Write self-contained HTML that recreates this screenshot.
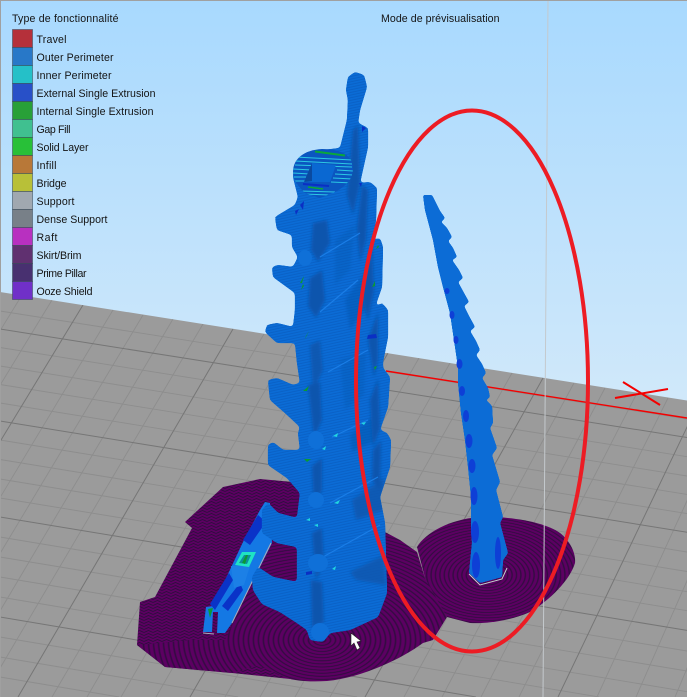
<!DOCTYPE html>
<html><head><meta charset="utf-8"><style>
html,body{margin:0;padding:0;width:687px;height:697px;overflow:hidden;background:#a9d9fe}
svg{display:block}
text{font-family:"Liberation Sans",sans-serif;font-size:10.6px;fill:#141414}
</style></head><body>
<svg width="687" height="697" viewBox="0 0 687 697" xmlns="http://www.w3.org/2000/svg">
<defs>
<linearGradient id="bg" x1="0" y1="0" x2="0" y2="1"><stop offset="0" stop-color="#a8d9fe"/><stop offset=".6" stop-color="#d2e9fa"/><stop offset="1" stop-color="#d6ebfa"/></linearGradient>
<clipPath id="floor"><path d="M0 292L687 400.5V697H0Z"/></clipPath>
<radialGradient id="ringL" gradientUnits="userSpaceOnUse" cx="0" cy="0" r="5" spreadMethod="repeat" gradientTransform="translate(322 640) scale(1 .62)"><stop offset="0" stop-color="#5c0062"/><stop offset=".45" stop-color="#5c0062"/><stop offset=".7" stop-color="#2c0e3c"/><stop offset="1" stop-color="#5c0062"/></radialGradient>
<radialGradient id="ringR" gradientUnits="userSpaceOnUse" cx="0" cy="0" r="4.4" spreadMethod="repeat" gradientTransform="translate(487 575) scale(1 .62)"><stop offset="0" stop-color="#5c0062"/><stop offset=".45" stop-color="#5c0062"/><stop offset=".7" stop-color="#2c0e3c"/><stop offset="1" stop-color="#5c0062"/></radialGradient>
<pattern id="chev" width="9" height="3" patternUnits="userSpaceOnUse"><rect width="9" height="3" fill="#5c0062"/><path d="M0 2.500L4.500 .5L9 2.500" fill="none" stroke="#2c0e3c" stroke-width=".9"/></pattern>
<pattern id="hatch" width="6" height="2.600" patternUnits="userSpaceOnUse" patternTransform="rotate(-12)"><rect y="1.600" width="6" height="1" fill="#0a58b8"/></pattern>
<filter id="goo" x="-5%" y="-5%" width="110%" height="110%" color-interpolation-filters="sRGB"><feGaussianBlur stdDeviation="1.8"/><feColorMatrix type="matrix" values="1 0 0 0 0 0 1 0 0 0 0 0 1 0 0 0 0 0 14 -6"/></filter>
<filter id="goo2" x="-20%" y="-5%" width="140%" height="110%" color-interpolation-filters="sRGB"><feGaussianBlur stdDeviation="1"/><feColorMatrix type="matrix" values="1 0 0 0 0 0 1 0 0 0 0 0 1 0 0 0 0 0 12 -5"/></filter>
<filter id="soft" x="-20%" y="-20%" width="140%" height="140%"><feGaussianBlur stdDeviation="1.600"/></filter>
<clipPath id="slice"><path d="M293 172C293 158 305 150 322 149C340 149 353 155 353 168C353 180 345 186 337 191L320 198L305 193C298 186 293 180 293 172Z"/></clipPath>
<clipPath id="body"><path d="M355 72L364 75L367 87L360 110L358 123L362 125L368 128L368 147L360 183L370 182L377 188L376 220L373 240L380 238L383 247L382 287L375 307L382 303L388 310L388 337L383 362L383 368L390 377L388 407L380 430L387 433L391 440L390 467L380 497L385 523L387 593L378 617L350 630L330 633L323 642L310 640L307 630L297 623L280 612L262 604L253 590L252 577L258 567L273 577L297 582L297 547L277 543L262 533L262 510L268 503L278 513L297 518L300 493L287 478L268 465L268 445L273 442L283 450L300 450L298 433L300 427L285 413L270 400L268 380L277 378L293 385L300 383L297 363L295 343L277 343L265 332L267 325L277 323L293 327L295 310L295 293L273 277L272 267L278 265L293 267L298 257L292 247L292 235L277 230L275 217L295 205L298 197L293 177L295 163L307 152L340 148L347 120L348 100L346 90L348 77Z"/></clipPath>
</defs>
<rect width="687" height="697" fill="url(#bg)"/>
<path d="M0 292L687 400.5V697H0Z" fill="#9b9b9b"/>
<g clip-path="url(#floor)" fill="none">
<path stroke="#8d8d8d" stroke-width=".9" d="M0 311L687 419M0 347.5L687 456.7M0 366L687 476M0 384.5L687 494.4M0 403L687 513.6M0 440L687 552M0 459.5L687 571.5M0 479L687 591.7M0 498L687 610.7M0 537L687 651M0 557L687 671M0 577L687 691.7M0 597L599 697M0 637L357 697M0 657L238 697M0 677L119 697
M22 295L-225 697M52 300L-190 697M113 310L-120 697M143 315L-86 697M173 319L-51 697M203 324L-17 697M264 334L52 697M295 339L87 697M326 344L121 697M357 348L156 697M419 358L225 697M450 363L260 697M481 368L295 697M512 373L330 697M574 383L404 697M605 388L442 697M637 393L481 697M668 398L519 697M730 407L597 697M761 412L636 697M792 417L675 697"/>
<path stroke="#767676" stroke-width="1" d="M0 329L687 437.5M0 421L687 532.3M0 517L687 630.4M0 617L476 697M83 305L-155 697M233 329L18 697M388 353L190 697M543 378L365 697M699 402L558 697"/>
</g>
<!-- red axis and X -->
<path d="M386 371L687 418" stroke="#f40000" stroke-width="1.4" fill="none"/>
<path d="M623 382L660 405M615 398L668 389" stroke="#f40000" stroke-width="2" fill="none"/>
<!-- legend -->
<g stroke="#3a4a5a" stroke-opacity=".55" stroke-width="1">
<rect x="12.5" y="29.5" width="20" height="18" fill="#b5303a"/>
<rect x="12.5" y="47.5" width="20" height="18" fill="#2878c8"/>
<rect x="12.5" y="65.5" width="20" height="18" fill="#25c0c8"/>
<rect x="12.5" y="83.5" width="20" height="18" fill="#2850c8"/>
<rect x="12.5" y="101.5" width="20" height="18" fill="#28a038"/>
<rect x="12.5" y="119.5" width="20" height="18" fill="#40c090"/>
<rect x="12.5" y="137.5" width="20" height="18" fill="#28c038"/>
<rect x="12.5" y="155.5" width="20" height="18" fill="#b87838"/>
<rect x="12.5" y="173.5" width="20" height="18" fill="#b8c038"/>
<rect x="12.5" y="191.5" width="20" height="18" fill="#a0a8b0"/>
<rect x="12.5" y="209.5" width="20" height="18" fill="#788088"/>
<rect x="12.5" y="227.5" width="20" height="18" fill="#b830c0"/>
<rect x="12.5" y="245.5" width="20" height="18" fill="#603070"/>
<rect x="12.5" y="263.5" width="20" height="18" fill="#483070"/>
<rect x="12.5" y="281.5" width="20" height="18" fill="#7030c8"/>
</g>
<text x="12" y="22" textLength="106.5">Type de fonctionnalité</text>
<text x="381" y="22" textLength="118.5">Mode de prévisualisation</text>
<text x="36.5" y="43" textLength="30">Travel</text>
<text x="36.5" y="61" textLength="77">Outer Perimeter</text>
<text x="36.5" y="79" textLength="75">Inner Perimeter</text>
<text x="36.5" y="97" textLength="119">External Single Extrusion</text>
<text x="36.5" y="115" textLength="117">Internal Single Extrusion</text>
<text x="36.5" y="133" textLength="34">Gap Fill</text>
<text x="36.5" y="151" textLength="52">Solid Layer</text>
<text x="36.5" y="169" textLength="20">Infill</text>
<text x="36.5" y="187" textLength="30">Bridge</text>
<text x="36.5" y="205" textLength="38">Support</text>
<text x="36.5" y="223" textLength="71">Dense Support</text>
<text x="36.5" y="241" textLength="21">Raft</text>
<text x="36.5" y="259" textLength="45">Skirt/Brim</text>
<text x="36.5" y="277" textLength="50">Prime Pillar</text>
<text x="36.5" y="295" textLength="56">Ooze Shield</text>
<!-- brims -->
<path fill="url(#ringR)" d="M417 547C425 533 450 519 480 517C510 516 545 522 560 533C570 541 576 553 575 563C570 580 550 600 530 612C510 621 485 624 470 623L447 617C438 603 430 590 425 578Z"/>
<path fill="url(#chev)" d="M137 645L140 602L155 597L192 528L185 522L223 487L260 479L293 482L330 500L330 640L300 680L232 673L165 667Z"/>
<path fill="url(#ringL)" d="M262 560L300 483L330 500L385 532L400 540L417 552L425 578L447 617L433 640L423 643C400 660 360 678 327 681C310 682 295 681 287 678L258 665L232 673L165 667L137 645L190 640L225 640Z"/>
<!-- wall support -->
<path fill="#1478e4" d="M203 632L206 607L213 606L243 542L260 510L265 502L270 503L272 543L232 623L225 633L217 633L218 612L213 612L212 632Z"/>
<path fill="#0a33c8" d="M258 515L266 522L250 545L243 540ZM229 573L233 580L215 610L210 604ZM240 583L243 590L228 611L222 606Z"/>
<path fill="#1c80e6" d="M231 566L250 566L244 585L234 588Z"/>
<path fill="#1fe3c4" d="M235 565L242 552L256 552L249 567Z"/>
<path fill="#0f8e9a" d="M239 563L244 555L251 555L247 564Z"/>
<path fill="#0a9a32" d="M242 563L246 555L248 555L245 564Z"/>
<path fill="#0a9a32" d="M208 609L213 608L210 618Z"/>
<path stroke="#aab" stroke-width="1" fill="none" d="M271 543L232 623M203 633L214 634"/>
<!-- main body -->
<g filter="url(#goo)"><path fill="#0b6cd6" d="M355 72L364 75L367 87L360 110L358 123L362 125L368 128L368 147L360 183L370 182L377 188L376 220L373 240L380 238L383 247L382 287L375 307L382 303L388 310L388 337L383 362L383 368L390 377L388 407L380 430L387 433L391 440L390 467L380 497L385 523L387 593L378 617L350 630L330 633L323 642L310 640L307 630L297 623L280 612L262 604L253 590L252 577L258 567L273 577L297 582L297 547L277 543L262 533L262 510L268 503L278 513L297 518L300 493L287 478L268 465L268 445L273 442L283 450L300 450L298 433L300 427L285 413L270 400L268 380L277 378L293 385L300 383L297 363L295 343L277 343L265 332L267 325L277 323L293 327L295 310L295 293L273 277L272 267L278 265L293 267L298 257L292 247L292 235L277 230L275 217L295 205L298 197L293 177L295 163L307 152L340 148L347 120L348 100L346 90L348 77Z"/></g>
<g clip-path="url(#body)">
<rect x="250" y="70" width="145" height="575" fill="url(#hatch)" opacity=".55"/>
<g fill="#0a55ad" filter="url(#soft)">
<path d="M353 130L358 125L360 183L353 215L347 195Z"/>
<path d="M362 185L368 190L366 240L360 262L357 228Z"/>
<path d="M372 245L374 290L368 320L362 296Z"/>
<path d="M378 312L378 360L374 378L368 340Z"/>
<path d="M378 378L380 428L373 448L370 400Z"/>
<path d="M381 440L380 490L372 480L373 450Z"/>
<path d="M313 223L327 220L330 243L318 262L311 250Z"/>
<path d="M310 278L322 270L325 300L316 318L308 306Z"/>
<path d="M310 345L320 340L323 370L313 392Z" opacity=".85"/>
<path d="M308 385L320 382L322 420L314 438Z"/>
<path d="M312 466L322 458L322 490L314 508Z"/>
<path d="M312 533L322 528L324 563L316 580Z"/>
<path d="M311 580L322 582L324 622L312 628Z"/>
<path d="M352 500L384 478L384 510L356 520Z" opacity=".8"/>
<path d="M350 572L384 555L386 585L356 580Z" opacity=".8"/>
<path d="M345 300L372 262L372 300L350 330Z" opacity=".45"/>
<path d="M350 435L378 412L376 440L352 452Z" opacity=".5"/>
<path d="M340 360L366 352L364 395L345 410Z" opacity=".3"/>
<path d="M335 240L355 225L350 270L335 285Z" opacity=".3"/>
</g>
<g fill="none" stroke="#1a7de6" stroke-width="1.2">
<path d="M320 257L360 233M320 312L358 280M328 372L368 350M332 437L368 420M330 503L378 477M323 557L380 525"/>
</g>
<g fill="#0f70d8">
<ellipse cx="320" cy="632" rx="9" ry="9"/>
<ellipse cx="305" cy="258" rx="7" ry="8"/>
<ellipse cx="316" cy="440" rx="8" ry="9"/>
<ellipse cx="316" cy="500" rx="8" ry="8"/>
<ellipse cx="318" cy="563" rx="10" ry="9"/>
</g>
</g>
<!-- top slice -->
<g clip-path="url(#slice)">
<rect x="290" y="146" width="66" height="54" fill="#0b56c0"/>
<g stroke="#2bc8e4" stroke-width="1.1" fill="none">
<path d="M295 157L352 160M295 161L352 164M295 165L352 167M293 169L312 170M337 170L353 171M293 173L310 174M335 174L353 175M293 177L307 177M333 178L353 179M293 181L305 181M331 182L353 183M300 191L335 192M303 194L330 195"/>
</g>
<path d="M315 151.500L345 155.500" stroke="#0aa83a" stroke-width="2"/>
<path d="M308 187L323 189" stroke="#0aa83a" stroke-width="1.600"/>
<path d="M303 184L329 186" stroke="#0a2fc4" stroke-width="2"/>
<path d="M312 163L336 165L330 182L304 182Z" fill="#0a68d2"/>
<path d="M312 163L304 182L312 181Z" fill="#0a4aa0"/>
</g>
<path d="M300 205L304 201L303 210ZM295 211L299 209L296 215Z" fill="#0a2fc4"/>
<!-- specks -->
<g fill="#0a9a32">
<path d="M300 283L304 276L302 283ZM304 286L301 290L303 284Z"/>
<path d="M306 336L309 331L305 339Z"/>
<path d="M303 391L309 386L307 391Z"/>
<path d="M372 287L375 281L375 286ZM378 245L376 249L379 247Z"/>
<path d="M374 367L377 366L375 370Z"/>
<path d="M304 459L311 459L307 462Z"/>
</g>
<g fill="#22d6e0">
<path d="M333 436L338 433L337 437ZM322 449L326 446L325 450Z"/>
<path d="M334 503L340 500L338 504ZM314 525L318 524L318 527Z"/>
<path d="M332 569L336 566L335 570ZM306 520L310 518L310 521ZM361 423L366 422L364 425Z"/>
</g>
<path fill="#0a2fc4" d="M368 335L376 334L377 338L367 339ZM306 572L312 571L312 574L306 575Z"/>
<path fill="#0a2fc4" d="M362 126L366 128L362 132ZM359 183L362 183L361 187Z"/>
<!-- thin spike -->
<g filter="url(#goo2)"><path fill="#0c6cd6" d="M423 195L432 195L436 203L440 211L445 218L441 222L447 228L452 237L448 241L453 248L457 257L452 260L459 270L463 278L458 282L464 293L469 302L464 306L469 316L475 327L470 331L476 341L480 350L476 355L482 364L486 373L482 378L488 388L490 397L486 400L492 406L493 423L490 428L497 448L492 455L500 482L496 490L503 517L500 523L508 553L503 560L502 577L480 583L469 573L472 543L471 527L471 497L468 467L465 440L461 413L458 383L458 367L450 313L443 287L438 267L433 240L425 210Z"/></g>
<g fill="#0e3fd6">
<ellipse cx="447" cy="291" rx="2.500" ry="3"/><ellipse cx="452" cy="315" rx="2.500" ry="4"/><ellipse cx="456" cy="340" rx="2.500" ry="4"/><ellipse cx="459.500" cy="364" rx="3" ry="5"/><ellipse cx="462" cy="391" rx="3" ry="5"/><ellipse cx="466" cy="416" rx="3" ry="6"/><ellipse cx="469" cy="441" rx="3.500" ry="7"/><ellipse cx="472" cy="466" rx="3.500" ry="7"/><ellipse cx="474" cy="496" rx="3.500" ry="9"/><ellipse cx="475" cy="532" rx="4" ry="11"/><ellipse cx="476" cy="565" rx="4" ry="13"/><ellipse cx="498" cy="553" rx="3" ry="16"/>
</g>
<path d="M469 574L480 585L502 579L507 568" fill="none" stroke="#c8d0d0" stroke-width="1"/>
<!-- vertical line -->
<path d="M548 0L543 697" stroke="#c4c9cd" stroke-width="1" fill="none"/>
<!-- red ellipse -->
<ellipse cx="472" cy="381" rx="116" ry="270.500" fill="none" stroke="#ed1c24" stroke-width="4"/>
<!-- cursor -->
<path d="M351 633L351 646L354 643L357 650L360 648L357 642L361 641Z" fill="#fff" stroke="#222" stroke-width=".6"/>
<!-- window edge -->
<path d="M0 .5H687M.5 0V697" stroke="#a0a0a0" stroke-width="1" fill="none"/>
</svg>
</body></html>
